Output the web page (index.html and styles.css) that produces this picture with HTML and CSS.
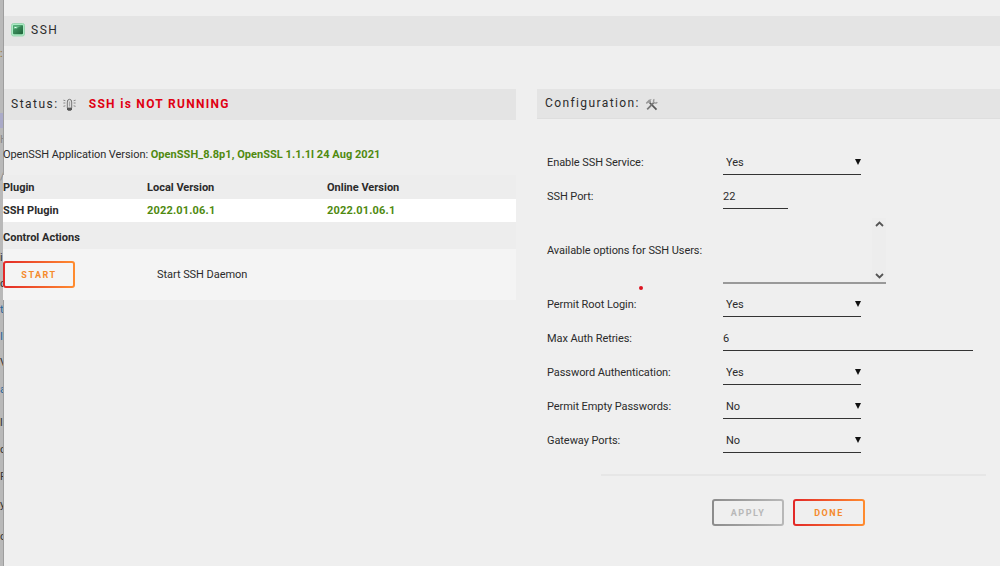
FILE: index.html
```html
<!DOCTYPE html>
<html lang="en">
<head>
    <meta charset="UTF-8">
    <meta name="viewport" content="width=device-width, initial-scale=1.0">
    <title>SSH</title>
    <link rel="stylesheet" href="styles.css">
</head>
<body>
    <div class="edge">
        <span class="brown">:</span>
        <span class="lilac"></span>
        <span class="faint">H</span>
        <span class="faint">/</span>
        <span>i</span>
        <span>c</span>
        <span class="blue">t</span>
        <span class="blue">I</span>
        <span>V</span>
        <span class="blue">a</span>
        <span>ll</span>
        <span>c</span>
        <span>F</span>
        <span>y</span>
        <span>o</span>
    </div>
    <main class="page">
        <header class="bar page-title">
            <svg width="14" height="14" viewBox="0 0 14 14">
                <defs>
                    <linearGradient id="screen" x1="0" y1="0" x2="1" y2="1">
                        <stop offset="0" stop-color="#4fa873"/>
                        <stop offset="1" stop-color="#1c6137"/>
                    </linearGradient>
                </defs>
                <rect x=".5" y=".5" width="13" height="12.5" rx="2" fill="#a9ecc4" stroke="#9bd6b1"/>
                <rect x="2" y="2" width="10" height="9.3" rx="1" fill="url(#screen)"/>
                <path d="M2.5 6.5l2-1 1 .6 2.5-2.4 3.5-1.2H3z" fill="#63b985"/>
                <path d="M3.5 4.5h2" stroke="#e4fff0"/>
            </svg>
            <span>SSH</span>
        </header>
        <div class="columns">
            <section class="status">
                <div class="bar">
                    <span class="status-label">Status:</span>
                    <svg width="13" height="13" viewBox="0 0 13 13" fill="none">
                        <path d="M4.3 10V4a2.2 2.7 0 0 1 4.4 0v6z" fill="#ddd" stroke="#777"/>
                        <path d="M6.5 3.5v5" stroke="#aaa"/>
                        <path d="M4 10h5v1.3L7.8 12.7H5.2L4 11.3z" fill="#555"/>
                        <path d="M.4 2.2l2 .5M.4 5h2M.4 8.3l2-.5M12.6 2.2l-2 .5M12.6 5h-2M12.6 8.3l-2-.5" stroke="#888"/>
                    </svg>
                    <span class="not-running">SSH is NOT RUNNING</span>
                </div>
                <p class="version"><span class="version-label">OpenSSH Application Version:</span> <b class="green">OpenSSH_8.8p1, OpenSSL 1.1.1l 24 Aug 2021</b></p>
                <div class="plugin-row head">
                    <span>Plugin</span>
                    <span>Local Version</span>
                    <span>Online Version</span>
                </div>
                <div class="plugin-row item">
                    <span>SSH Plugin</span>
                    <span class="green number">2022.01.06.1</span>
                    <span class="green number">2022.01.06.1</span>
                </div>
                <div class="actions-title">Control Actions</div>
                <div class="action">
                    <button class="btn">START</button>
                    <span>Start SSH Daemon</span>
                </div>
            </section>
            <section class="config">
                <div class="bar">
                    <span class="config-label">Configuration:</span>
                    <svg width="13" height="13" viewBox="0 0 13 13" fill="none">
                        <path d="M4.5 4.5l7 7.2" stroke="#555" stroke-width="1.7"/>
                        <path d="M.8 4.8l3-3 3-.8-1.2 1.5.6 1-1.8 1.8-1-.5-1.8 1.2z" fill="#999"/>
                        <path d="M2.2 11.3l6.6-6.6" stroke="#777" stroke-width="1.7"/>
                        <path d="M9.4 1.4a2 2 0 1 0 2.8 2.7" stroke="#999" stroke-width="1.4"/>
                    </svg>
                </div>
                <form>
                    <div class="field">
                        <label>Enable SSH Service:</label>
                        <div class="select"><select><option>Yes</option></select></div>
                    </div>
                    <div class="field">
                        <label>SSH Port:</label>
                        <input class="port" type="text" value="22">
                    </div>
                    <div class="field users">
                        <label>Available options for SSH Users:</label>
                        <div class="list">
                            <div class="scrollbar">
                                <svg width="9" height="6" viewBox="0 0 9 6"><path d="M1 5l3.5-3.5L8 5"/></svg>
                                <svg width="9" height="6" viewBox="0 0 9 6"><path d="M1 1l3.5 3.5L8 1"/></svg>
                            </div>
                        </div>
                    </div>
                    <div class="field">
                        <label>Permit Root Login:</label>
                        <div class="select"><select><option>Yes</option></select></div>
                    </div>
                    <div class="field">
                        <label>Max Auth Retries:</label>
                        <input type="text" value="6">
                    </div>
                    <div class="field">
                        <label>Password Authentication:</label>
                        <div class="select"><select><option>Yes</option></select></div>
                    </div>
                    <div class="field">
                        <label>Permit Empty Passwords:</label>
                        <div class="select"><select><option>No</option></select></div>
                    </div>
                    <div class="field">
                        <label>Gateway Ports:</label>
                        <div class="select"><select><option>No</option></select></div>
                    </div>
                    <hr>
                    <div class="buttons">
                        <button class="btn off" type="button">APPLY</button>
                        <button class="btn" type="button">DONE</button>
                    </div>
                </form>
                <i class="dot"></i>
            </section>
        </div>
    </main>
</body>
</html>
```
FILE: styles.css
```css
* {
    box-sizing: border-box;
}
body {
    margin: 0;
    height: 566px;
    display: flex;
    overflow: hidden;
    background: #efefef;
    color: #2b2b2b;
    font-family: Roboto, "Liberation Sans", sans-serif;
    font-size: 11px;
    line-height: 14px;
}

/* sliver of the window behind */
.edge {
    width: 4px;
    height: 566px;
    flex: none;
    overflow: hidden;
    display: grid;
    grid-template-rows: 66px 15px 37px 86px 26px 26px 27px 26px 27px 33px 27px 27px 28px 32px 14px;
    align-content: start;
    padding-top: 47px;
    background: #b9b9b9;
    border-right: 1px solid #9e9e9e;
    color: #333;
}
.edge .brown {
    color: #9a7430;
}
.edge .lilac {
    background: #aaaac8;
}
.edge .faint {
    color: #888;
    padding-top: 5px;
}
.edge .blue {
    color: #24659c;
}

.page {
    flex: 1;
    padding-top: 16px;
}
.bar {
    display: flex;
    align-items: center;
    background: #e4e4e4;
    font-size: 12px;
    letter-spacing: 1.5px;
}
.page-title {
    height: 30px;
    padding: 0 0 2px 7px;
    gap: 6px;
}
.columns {
    display: grid;
    grid-template-columns: 512px 463px;
    column-gap: 21px;
    margin-top: 43px;
}
.green {
    color: #4f8a10;
}

/* status */
.status .bar {
    height: 31px;
    padding: 0 0 1px 7px;
}
.status .bar svg {
    margin: 1px 13px 0 4px;
}
.not-running {
    color: #e00012;
    font-weight: bold;
    letter-spacing: 1.3px;
}
.version {
    margin: 28px 0 13px -1px;
    white-space: nowrap;
}
.version-label {
    letter-spacing: -0.07px;
}
.version .green {
    letter-spacing: 0.04px;
}
.plugin-row {
    display: grid;
    grid-template-columns: 144px 180px 1fr;
    align-items: center;
    margin-left: -1px;
    font-weight: bold;
}
.head {
    height: 24px;
    padding-top: 1px;
    background: #ededed;
}
.item {
    height: 23px;
    padding-top: 1px;
    background: #fff;
}
.number {
    letter-spacing: 0.17px;
}
.actions-title {
    height: 27px;
    line-height: 31px;
    margin-left: -1px;
    background: #ededed;
    font-weight: bold;
}
.action {
    height: 51px;
    display: flex;
    align-items: center;
    gap: 82px;
    margin-left: -1px;
    background: #f4f4f4;
    letter-spacing: -0.05px;
}
.btn {
    width: 72px;
    height: 27px;
    padding: 0;
    border: 2px solid transparent;
    border-radius: 3px;
    background: linear-gradient(#efefef, #efefef) padding-box, linear-gradient(90deg, #e22828, #ff8c2f) border-box;
    color: #f58a2c;
    font: bold 9px Roboto, sans-serif;
    letter-spacing: 1.5px;
}
.action .btn {
    background: linear-gradient(#f4f4f4, #f4f4f4) padding-box, linear-gradient(90deg, #e22828, #ff8c2f) border-box;
}
.btn.off {
    background: linear-gradient(#efefef, #efefef) padding-box, linear-gradient(90deg, #8c8c8c, #b8b8b8) border-box;
    color: #b8b8b8;
}

/* configuration */
.config {
    position: relative;
}
.config .bar {
    height: 30px;
    padding: 0 0 1px 8px;
    border-bottom: 1px solid #dedede;
    letter-spacing: 1.4px;
}
.config .bar svg {
    margin: 2px 0 0 5px;
}
form {
    padding: 27px 14px 0 10px;
}
.field {
    height: 34px;
    display: grid;
    grid-template-columns: 176px 250px;
    align-items: center;
}
.field.users {
    height: 74px;
}
label {
    letter-spacing: -0.07px;
}
.select, input, .list {
    align-self: start;
}
.select {
    width: 138px;
    height: 29px;
    display: flex;
    align-items: center;
    justify-content: space-between;
    padding: 5px 0 0 3px;
    border-bottom: 1px solid #333;
}
.select::after {
    content: "";
    margin-bottom: 1px;
    border: 3px solid transparent;
    border-top: 6px solid #111;
    border-bottom: 0;
}
select {
    appearance: none;
    padding: 0;
    border: 0;
    background: none;
    color: inherit;
    font: inherit;
}
input {
    width: 250px;
    height: 29px;
    padding: 5px 0 0;
    border: 0;
    border-bottom: 1px solid #333;
    background: none;
    color: inherit;
    font: inherit;
}
.port {
    width: 65px;
}
.list {
    width: 163px;
    height: 66px;
    margin-top: 4px;
    display: flex;
    justify-content: flex-end;
    border-bottom: 2px solid #999;
}
.scrollbar {
    width: 14px;
    padding: 3px 0;
    display: flex;
    flex-direction: column;
    align-items: center;
    justify-content: space-between;
    background: #ededed;
}
.scrollbar path {
    fill: none;
    stroke: #555;
    stroke-width: 1.8;
}
hr {
    width: 385px;
    height: 2px;
    margin: 16px 0 23px 54px;
    border: 0;
    background: #e6e6e6;
}
.buttons {
    display: flex;
    gap: 9px;
    padding-left: 165px;
}
.dot {
    position: absolute;
    left: 102px;
    top: 197px;
    width: 4px;
    height: 4px;
    border-radius: 50%;
    background: #dc1420;
}
```
